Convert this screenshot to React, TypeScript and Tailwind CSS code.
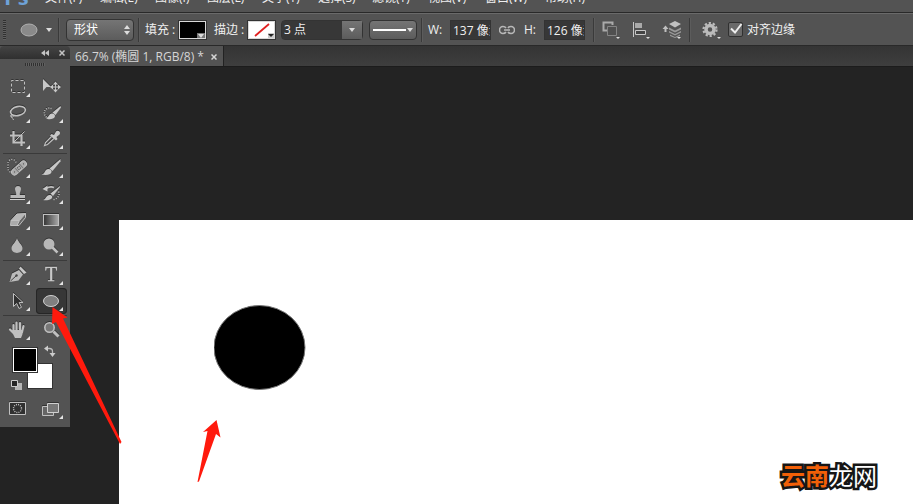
import type { ReactNode } from "react";

const menus = [
  { label: "文件(F)", width: "w-[55px]" },
  { label: "编辑(E)", width: "w-[55px]" },
  { label: "图像(I)", width: "w-[52px]" },
  { label: "图层(L)", width: "w-[55px]" },
  { label: "文字(Y)", width: "w-[56px]" },
  { label: "选择(S)", width: "w-[54px]" },
  { label: "滤镜(T)", width: "w-[56px]" },
  { label: "视图(V)", width: "w-[57px]" },
  { label: "窗口(W)", width: "w-[60px]" },
  { label: "帮助(H)", width: "w-[60px]" },
];

type Tool = { name: string; icon: ReactNode; more?: boolean; active?: boolean };

const toolGroups: Tool[][] = [
  [
    {
      name: "矩形选框工具",
      more: true,
      icon: <rect x="8.5" y="6.5" width="13" height="12" strokeDasharray="3 2" strokeDashoffset="1" />,
    },
    {
      name: "移动工具",
      icon: (
        <>
          <path d="M7 5v12l3.500-4h4.500z" fill="#c8c8c8" stroke="none" />
          <path d="M19.500 9v8M15.500 13h8" />
          <path d="m19.500 7.500-2.500 3h5zM19.500 18.500l-2.500-3h5zM14 13l3-2.500v5zM25 13l-3-2.500v5z" fill="#c8c8c8" stroke="none" />
        </>
      ),
    },
    {
      name: "套索工具",
      more: true,
      icon: (
        <>
          <ellipse cx="15" cy="11" rx="7.500" ry="4.500" transform="rotate(-12 15 11)" strokeWidth="1.600" />
          <path d="M9.500 14.500c-2.500-.5-2.500 3 0 2.500 2-.5.500-3-1-1.500-1 2 1.500 2 2 4.500" />
        </>
      ),
    },
    {
      name: "快速选择工具",
      more: true,
      icon: (
        <>
          <path d="M15.500 8.500a5 5 0 1 0-2 9.500" strokeDasharray="1 1.300" strokeWidth="1.500" />
          <path d="m24.500 6-8 6.500 3 2.500 5.500-7.500z" fill="#c8c8c8" stroke="none" />
          <path d="M10 18c3 0 2.500-5 6.500-4.500 3 .5 3.500 3.500.5 5-2.500 1.300-5.500 1-7-.5z" fill="#c8c8c8" stroke="none" />
        </>
      ),
    },
    {
      name: "裁剪工具",
      more: true,
      icon: (
        <>
          <path d="M10.500 5v11.500H22M7 9.500h11.500V20" strokeWidth="2.200" />
          <path d="m11 16 10.500-10.500" />
        </>
      ),
    },
    {
      name: "吸管工具",
      more: true,
      icon: (
        <>
          <path d="m15.500 8 2.500 1 2-3.500c1-1.500 4.500-1 4 2-.3 1.500-2 2-3.500 3.500l1 2-1.500 1.500-6-5z" fill="#c8c8c8" stroke="none" />
          <path d="m15.500 10.500-6 6-1 3 3-1 6.500-6" strokeWidth="1.200" />
        </>
      ),
    },
  ],
  [
    {
      name: "污点修复画笔工具",
      more: true,
      icon: (
        <>
          <path d="M13 7.500a4 4 0 0 0-8 2v4a4 4 0 0 0 4 4" strokeDasharray="1 1.500" strokeWidth="1.300" />
          <g transform="rotate(-42 16 13)">
            <rect x="7" y="10" width="18" height="6" rx="3" fill="#aaa" />
            <path d="M13 10v6M19 10v6" stroke="#777" />
            <path d="M15 12h.1M17 12h.1M15 14h.1M17 14h.1M10 13h.1M22 13h.1" stroke="#333" strokeLinecap="round" />
          </g>
        </>
      ),
    },
    {
      name: "画笔工具",
      more: true,
      icon: (
        <>
          <path d="m24.500 4-11 9.500 3 2.500 8-9.700z" fill="#c8c8c8" stroke="none" />
          <path d="M5.500 19.500c4-.5 3-5.500 7-5.500 3.500 0 4 3.500 1.500 5-2.500 1.300-6 1-8.500.5z" fill="#c8c8c8" stroke="none" />
        </>
      ),
    },
    {
      name: "仿制图章工具",
      more: true,
      icon: (
        <>
          <path d="M12 8a3 3 0 1 1 6 0c0 2-1.500 3-1.200 6H22v3H7.500v-3h5.700c.3-3-1.200-4-1.200-6z" fill="#b8b8b8" stroke="none" />
          <path d="M7 18.500h15" stroke="#d0d0d0" />
        </>
      ),
    },
    {
      name: "历史记录画笔工具",
      more: true,
      icon: (
        <>
          <path d="m24 5-9.500 7.500 2.500 2.500 7-9z" fill="#c8c8c8" stroke="none" />
          <path d="M7 19c3-.5 3-5 6.500-5 3 0 3.500 2.500 1.500 4-2 1.200-5.500 1.500-8 1z" fill="#c8c8c8" stroke="none" />
          <path d="M18 6.500c-2.500-1-5.500-.5-8 1" strokeWidth="1.800" />
          <path d="m6.500 8 5-3.500v6z" fill="#c8c8c8" stroke="none" />
          <path d="M22.500 10.500c1.500 3 0 7-5 8" strokeDasharray="1 1.500" strokeWidth="1.500" />
        </>
      ),
    },
    {
      name: "橡皮擦工具",
      more: true,
      icon: (
        <>
          <path d="m14 7 8.500-.5-6 7H8z" fill="#b8b8b8" />
          <path d="M8 13.500h8.500L14 18.500H7.500z" fill="#aaa" />
          <path d="m16.500 13.500 6-7v4L16 18.500h-2z" fill="#666" />
        </>
      ),
    },
    {
      name: "渐变工具",
      more: true,
      icon: (
        <>
          <defs>
            <linearGradient id="gradientTool">
              <stop stopColor="#333" />
              <stop offset="1" stopColor="#aaa" />
            </linearGradient>
          </defs>
          <rect x="7.500" y="7.500" width="15" height="11" fill="url(#gradientTool)" />
        </>
      ),
    },
    {
      name: "模糊工具",
      more: true,
      icon: <path d="M14 5c1 4 5.500 7 5.500 10 0 6.500-11 6.500-11 0C8.500 12 13 9 14 5z" fill="#b8b8b8" stroke="none" />,
    },
    {
      name: "减淡工具",
      more: true,
      icon: (
        <>
          <circle cx="13" cy="11" r="5.500" fill="#b8b8b8" stroke="none" />
          <path d="m16.500 14.500 5 5" strokeWidth="2.500" />
        </>
      ),
    },
  ],
  [
    {
      name: "钢笔工具",
      more: true,
      icon: (
        <>
          <path d="m6.500 20 2.500-8.500 7-3.500 4 4.500-4.500 6z" fill="#bcbcbc" stroke="none" />
          <path d="m7.500 19 5.500-5" stroke="#444" />
          <circle cx="13.500" cy="13.500" r="1.200" fill="#444" stroke="none" />
          <path d="m17.500 4.500 6 6-2.500 1.500-5-5.500z" fill="#c8c8c8" stroke="none" />
        </>
      ),
    },
    {
      name: "横排文字工具",
      more: true,
      icon: (
        <text x="15" y="19" textAnchor="middle" className="font-['Liberation_Serif',serif] text-[20px]" fill="#cacaca" stroke="#cacaca" strokeWidth="0.300">
          T
        </text>
      ),
    },
    {
      name: "路径选择工具",
      more: true,
      icon: <path d="M10.500 5.500v13l3.200-3 2.300 5 2.500-1.200-2.300-4.800h3.800z" fill="#303030" />,
    },
    {
      name: "椭圆工具",
      more: true,
      active: true,
      icon: <ellipse cx="15" cy="13" rx="7.500" ry="5.500" fill="#808080" stroke="#d0d0d0" />,
    },
  ],
  [
    {
      name: "抓手工具",
      more: true,
      icon: (
        <>
          <path d="M10.500 8v7M13.500 5.500V14M17 6v8M20.500 9 19 15M7 12.500l4 4" strokeWidth="2.200" strokeLinecap="round" />
          <path d="M9.500 13H20c0 4-1 5.500-2 8h-6c-1.500-3-2.500-5-2.500-8z" fill="#c0c0c0" stroke="none" />
        </>
      ),
    },
    {
      name: "缩放工具",
      icon: (
        <>
          <circle cx="13.500" cy="10.500" r="4.700" fill="#777" strokeWidth="1.600" />
          <path d="m17.500 14.500 5 5" strokeWidth="3" />
        </>
      ),
    },
  ],
];

function ToolButton({ name, icon, more, active }: Tool) {
  return (
    <button
      type="button"
      aria-label={name}
      aria-pressed={active}
      className={
        active
          ? "h-[26px] rounded-sm bg-[#373737] shadow-[inset_0_0_0_1px_#262626]"
          : "h-[26px] rounded-sm hover:bg-[#606060]"
      }
    >
      <svg viewBox="0 0 31 26" className="block h-[26px] w-full" fill="none" stroke="#c0c0c0">
        <g className={active ? "" : "drop-shadow-[0_-1px_0_#333]"}>{icon}</g>
        {more && <path d="M27 19v4h-4z" fill="#e4e4e4" stroke="none" />}
      </svg>
    </button>
  );
}

function Caret() {
  return (
    <svg viewBox="0 0 6 4" className="h-1 w-1.5 shrink-0" fill="#dcdcdc">
      <path d="M0 0h6L3 4z" />
    </svg>
  );
}

function Divider() {
  return <span className="h-6 w-0.5 shrink-0 border-l border-[#3a3a3a] bg-[#5c5c5c]" />;
}

function Grip({ className }: { className: string }) {
  return <span className={`shrink-0 ${className}`} />;
}

function MenuBar() {
  return (
    <nav className="flex h-3 items-end overflow-hidden pb-1.5">
      <span className="w-[45px] shrink-0 pl-1 font-['Open_Sans',sans-serif] text-[22px] leading-5 font-bold text-[#6ea2d8]">
        Ps
      </span>
      {menus.map((menu) => (
        <button key={menu.label} type="button" className={`shrink-0 text-left leading-4 ${menu.width}`}>
          {menu.label}
        </button>
      ))}
    </nav>
  );
}

function OptionsBar() {
  return (
    <div className="flex h-[34px] items-center overflow-hidden border-y border-t-[#292929] border-b-[#292929] pt-0.5 pl-[3px] shadow-[inset_0_1px_0_#6a6a6a]">
      <Grip className="h-5 w-[3px] bg-[repeating-linear-gradient(#303030_0_1px,#606060_1px_2px)]" />
      <button type="button" aria-label="椭圆工具预设" className="ml-3.5 flex shrink-0 items-center gap-2">
        <svg viewBox="0 0 18 14" className="h-3.5 w-[18px]">
          <ellipse cx="9" cy="7" rx="8" ry="6" fill="#8a8a8a" stroke="#b0b0b0" />
        </svg>
        <Caret />
      </button>
      <span className="w-1.5 shrink-0" />
      <Divider />
      <div className="relative ml-1.5 shrink-0">
        <select
          aria-label="工具模式"
          className="block h-[22px] w-[68px] appearance-none rounded-sm border border-[#333] bg-linear-to-b from-[#757575] to-[#5c5c5c] pl-[7px] text-white"
        >
          <option>形状</option>
          <option>路径</option>
          <option>像素</option>
        </select>
        <svg viewBox="0 0 6 10" className="pointer-events-none absolute top-1.5 right-1 h-2.5 w-1.5" fill="#ddd">
          <path d="M0 4h6L3 0zM0 6h6l-3 4z" />
        </svg>
      </div>
      <span className="w-1 shrink-0" />
      <Divider />
      <span className="ml-[5px] w-[34px] shrink-0">填充 :</span>
      <button
        type="button"
        aria-label="填充"
        className="flex h-[18px] w-[27px] shrink-0 items-end justify-end border border-[#d8d8d8] bg-black outline outline-[#333]"
      >
        <span className="flex h-[5px] w-2 items-center justify-center bg-[#777]">
          <Caret />
        </span>
      </button>
      <span className="ml-2 w-[34px] shrink-0">描边 :</span>
      <button
        type="button"
        aria-label="描边"
        className="h-[18px] w-[27px] shrink-0 border border-[#d8d8d8] bg-white outline outline-[#333]"
      >
        <svg viewBox="0 0 25 16" className="h-4 w-[25px]">
          <path d="M6 14 20 2" stroke="#e02020" strokeWidth="1.800" />
          <path d="M19 11h6v5h-6z" fill="#ccc" />
          <path d="M19 12h6l-3 3z" fill="#222" />
        </svg>
      </button>
      <div className="ml-1.5 flex h-5 shrink-0 rounded-sm border border-[#333]">
        <input aria-label="描边宽度" defaultValue="3 点" className="w-[60px] bg-[#373737] pl-0.5" />
        <button
          type="button"
          aria-label="描边宽度选项"
          className="flex w-5 items-center justify-center bg-linear-to-b from-[#757575] to-[#5c5c5c]"
        >
          <Caret />
        </button>
      </div>
      <button
        type="button"
        aria-label="描边类型"
        className="ml-1.5 flex h-5 w-12 shrink-0 items-center gap-px rounded-sm border border-[#333] bg-linear-to-b from-[#757575] to-[#5c5c5c] px-[3px]"
      >
        <span className="h-0.5 flex-1 bg-white" />
        <Caret />
      </button>
      <span className="w-1 shrink-0" />
      <Divider />
      <label htmlFor="shape-width" className="ml-[5px] w-[22px] shrink-0">
        W:
      </label>
      <input
        id="shape-width"
        defaultValue="137 像素"
        className="h-5 w-[41px] shrink-0 border border-[#333] bg-[#373737] pl-0.5"
      />
      <button type="button" aria-label="链接宽高" className="mx-2 shrink-0">
        <svg viewBox="0 0 16 10" className="h-2.5 w-4" fill="none" stroke="#b8b8b8" strokeWidth="1.600">
          <path d="M7 3C6 1.500 5 1.500 4 1.500a3.500 3.500 0 0 0 0 7c1 0 2 0 3-1.500M9 3c1-1.500 2-1.500 3-1.500a3.500 3.500 0 0 1 0 7c-1 0-2 0-3-1.500M5 5h6" />
        </svg>
      </button>
      <label htmlFor="shape-height" className="ml-px w-5 shrink-0">
        H:
      </label>
      <input
        id="shape-height"
        defaultValue="126 像素"
        className="h-5 w-[41px] shrink-0 border border-[#333] bg-[#373737] pl-0.5"
      />
      <span className="w-2 shrink-0" />
      <Divider />
      <div className="mx-[7px] flex shrink-0 gap-2.5">
        <button type="button" aria-label="路径操作">
          <svg viewBox="0 0 20 20" className="size-5" fill="none">
            <path d="M5 10.500H1.500v-8h9V5" stroke="#aaa" strokeWidth="2" />
            <path d="M5.500 6.500h9v9h-9z" fill="#505050" stroke="#858585" />
            <path d="M14 17h4l-2 2z" fill="#ddd" />
          </svg>
        </button>
        <button type="button" aria-label="路径对齐方式">
          <svg viewBox="0 0 20 20" className="size-5" fill="none">
            <path d="M1.500 2v15" stroke="#c8c8c8" />
            <path d="M3 3h7v5H3z" fill="#aaa" />
            <path d="M3.500 10.500h10v4h-10z" fill="#444" stroke="#c8c8c8" />
            <path d="M14 17h4l-2 2z" fill="#ddd" />
          </svg>
        </button>
        <button type="button" aria-label="路径排列方式">
          <svg viewBox="0 0 20 20" className="size-5">
            <path d="m13 1 6 3-6 3.500L7 4z" fill="#c0c0c0" />
            <path d="m7 7.500 6 3 6-3v2l-6 3-6-3zM7 11l6 3 6-3v1.500l-6 3-6-3zM8 14.500l5 2.500 5-2.500V16l-5 2-5-2z" fill="#999" />
            <path d="m3.500 5.500 3 3.500h-2v3h-2V9h-2z" fill="#c0c0c0" />
            <path d="M15 17h4l-2 2z" fill="#ddd" />
          </svg>
        </button>
      </div>
      <Divider />
      <button type="button" aria-label="几何选项" className="ml-2.5 shrink-0">
        <svg viewBox="0 0 22 20" className="h-5 w-[22px]" fill="none">
          <circle cx="9" cy="9.500" r="4" stroke="#bbb" strokeWidth="3.500" />
          <circle cx="9" cy="9.500" r="6.500" stroke="#bbb" strokeWidth="2.200" strokeDasharray="2.200 1.880" />
          <path d="M16 17h4l-2 2z" fill="#ddd" />
        </svg>
      </button>
      <label className="ml-[5px] flex shrink-0 items-center gap-1">
        <span className="relative -mt-0.5">
          <input
            type="checkbox"
            defaultChecked
            className="peer block size-[15px] appearance-none rounded-xs border border-[#303030] bg-[#6a6a6a]"
          />
          <svg
            viewBox="0 0 15 15"
            className="pointer-events-none absolute inset-0 hidden size-[15px] peer-checked:block"
            fill="none"
            stroke="#eee"
            strokeWidth="2"
          >
            <path d="m3 6.500 4 4L13.500 2" />
          </svg>
        </span>
        对齐边缘
      </label>
    </div>
  );
}

function ColorSwatches() {
  return (
    <div className="relative h-[53px]">
      <button
        type="button"
        aria-label="背景色"
        className="absolute top-5 left-6 size-[26px] border border-[#333] bg-white"
      />
      <button
        type="button"
        aria-label="前景色"
        className="absolute top-1 left-[9px] size-[26px] border border-[#333] bg-black shadow-[inset_0_0_0_1px_#fff]"
      />
      <button type="button" aria-label="切换前景色和背景色" className="absolute top-0.5 left-[41px]">
        <svg viewBox="0 0 12 12" className="block size-3" fill="none">
          <path d="M3 3.500h2.500q3 0 3 3V9" stroke="#bbb" strokeWidth="1.300" />
          <path d="M0 3.500 4 .5v6zM8.500 12l-3-4h6z" fill="#ccc" />
        </svg>
      </button>
      <button type="button" aria-label="默认前景色和背景色" className="absolute top-9 left-2">
        <svg viewBox="0 0 11 12" className="block h-3 w-[11px]">
          <path d="M4 4h7v7H4z" fill="#b5b5b5" />
          <path d="M.5 1.500h6v6h-6z" fill="#262626" stroke="#ccc" />
        </svg>
      </button>
    </div>
  );
}

function ToolPanel() {
  return (
    <aside className="w-[70px] shrink-0 self-start bg-[#535353] pb-[5px]">
      <div className="flex h-[13px] items-center justify-end gap-2.5 rounded-t-sm bg-linear-to-b from-[#444] to-[#303030] pr-[5px]">
        <button type="button" aria-label="折叠面板">
          <svg viewBox="0 0 8 6" className="h-1.5 w-2" fill="#c4c4c4">
            <path d="M4 0v6L0 3zM8 0v6L4 3z" />
          </svg>
        </button>
        <button type="button" aria-label="关闭面板">
          <svg viewBox="0 0 6 6" className="size-1.5" stroke="#c4c4c4" strokeWidth="1.500">
            <path d="m.5.5 5 5M5.500.5l-5 5" />
          </svg>
        </button>
      </div>
      <div className="flex h-[15px] justify-center pt-1">
        <Grip className="h-[3px] w-5 bg-[repeating-linear-gradient(90deg,#303030_0_1px,#606060_1px_2px)]" />
      </div>
      <div className="px-[3px]">
        {toolGroups.map((group, index) => (
          <div key={group[0].name}>
            {index > 0 && <div className="my-px h-px bg-[#3a3a3a]" />}
            <div className="grid grid-cols-2 gap-x-0.5">
              {group.map((tool) => (
                <ToolButton key={tool.name} {...tool} />
              ))}
            </div>
          </div>
        ))}
        <ColorSwatches />
        <div className="grid grid-cols-2 gap-x-0.5">
          <ToolButton
            name="以快速蒙版模式编辑"
            icon={
              <>
                <path d="M6.500 6.500h16v12h-16z" fill="#303030" />
                <circle cx="14.500" cy="12.500" r="4" strokeDasharray="1 1.100" strokeWidth="1.400" />
              </>
            }
          />
          <ToolButton
            name="更改屏幕模式"
            more
            icon={
              <>
                <path d="M6.500 10.500h11v9h-11z" fill="#666" />
                <path d="M11.500 7.500h11v9h-11z" fill="#777" stroke="#d0d0d0" />
              </>
            }
          />
        </div>
      </div>
    </aside>
  );
}

function DocumentTabs() {
  return (
    <div className="flex h-[21px] border-b border-[#1c1c1c] bg-linear-to-b from-[#343434] to-[#3e3e3e]">
      <div className="flex items-center gap-[7px] border-r border-[#222] bg-[#535353] pt-0.5 pr-1.5 pl-[5px] text-[#d6d6d6]">
        <span className="leading-4">66.7% (椭圆 1, RGB/8) *</span>
        <button type="button" aria-label="关闭文档">
          <svg viewBox="0 0 6 6" className="size-1.5" stroke="#d6d6d6" strokeWidth="1.500">
            <path d="m.5.5 5 5M5.500.5l-5 5" />
          </svg>
        </button>
      </div>
    </div>
  );
}

export default function App() {
  return (
    <div className="relative flex min-h-screen flex-col overflow-hidden bg-[#535353] font-['Open_Sans','Noto_Sans_CJK_SC',sans-serif] text-xs text-[#f0f0f0]">
      <MenuBar />
      <OptionsBar />
      <div className="flex flex-1 bg-[#232323]">
        <ToolPanel />
        <main className="flex min-w-0 flex-1 flex-col">
          <DocumentTabs />
          <div className="flex flex-1 pt-[153px] pl-[49px]">
            <div className="flex-1 bg-white">
              <svg viewBox="0 0 92 86" className="mt-[85px] ml-[95px] h-[86px] w-[92px]">
                <ellipse cx="45.500" cy="42.500" rx="45.500" ry="42" stroke="#777" strokeWidth="1" />
              </svg>
            </div>
          </div>
        </main>
      </div>
      <svg viewBox="0 0 70 137" className="pointer-events-none absolute top-[307px] left-[52px] h-[137px] w-[70px]" fill="#ff1a0d">
        <path d="M.5 0 15.500 10.500 11 11.500 69.500 135 68 137 4 15 0 17z" />
      </svg>
      <svg viewBox="0 0 24 63" className="pointer-events-none absolute top-[420px] left-[197px] h-[63px] w-6" fill="#ff1a0d">
        <path d="M19.500 0 23.500 17.500 19 14 2 61.500.5 62 10.500 11 6 12z" />
      </svg>
      <p className="absolute right-9 bottom-3 text-2xl leading-8 text-white [-webkit-text-stroke:5px_#161616] [paint-order:stroke_fill]">
        <span className="font-bold text-[#f26008]">云南</span>龙网
      </p>
    </div>
  );
}
